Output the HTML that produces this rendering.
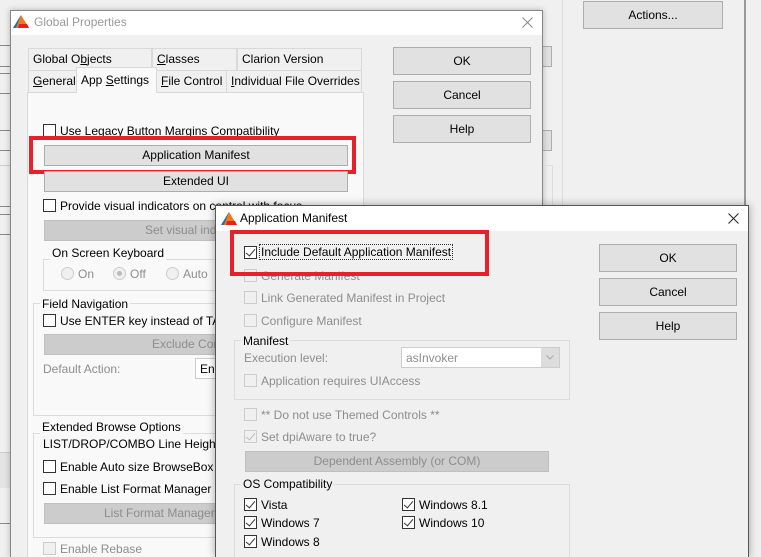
<!DOCTYPE html>
<html><head><meta charset="utf-8">
<style>
*{box-sizing:border-box;margin:0;padding:0}
html,body{width:761px;height:557px;overflow:hidden}
body{background:#f0f0f0;position:relative;font-family:"Liberation Sans",sans-serif;font-size:12px;color:#000}
.a{position:absolute}
.t{position:absolute;white-space:nowrap;line-height:14px}
.dis{color:#8d8d8d}
.btn{position:absolute;background:#e1e1e1;border:1px solid #adadad;text-align:center;white-space:nowrap;overflow:hidden}
.btnd{position:absolute;background:#cccccc;border:1px solid #bfbfbf;color:#8d8d8d;text-align:center;white-space:nowrap;overflow:hidden}
.cb{position:absolute;width:13px;height:13px;border:1px solid #333;background:#fff}
.cbd{position:absolute;width:13px;height:13px;border:1px solid #ccc;background:#f0f0f0}
.ck::after{content:"";position:absolute;left:3px;top:0px;width:4px;height:8px;border:solid #333;border-width:0 1.5px 1.5px 0;transform:rotate(40deg)}
.ckd::after{border-color:#bbb}
.grp{position:absolute;border:1px solid #dcdcdc}
.gl{position:absolute;background:#f0f0f0;padding:0 2px;white-space:nowrap;line-height:14px}
.gl2{background:#f9f9f9}
.rad{position:absolute;width:13px;height:13px;border:1px solid #ccc;border-radius:50%;background:#f0f0f0}
.red{position:absolute;border:4px solid #e8202a}
.tab{position:absolute;background:#f0f0f0;border:1px solid #d9d9d9;border-bottom:none;white-space:nowrap;padding-left:4px;line-height:20px}
</style></head><body>
<div class="a" style="left:0;top:0;width:28px;height:557px;background:#f0f0f0"></div>
<div class="a" style="left:0;top:45px;width:10px;height:1px;background:#888"></div>
<div class="a" style="left:0;top:66px;width:10px;height:1px;background:#888"></div>
<div class="a" style="left:0;top:73px;width:10px;height:1px;background:#888"></div>
<div class="a" style="left:0;top:93px;width:10px;height:1px;background:#888"></div>
<div class="a" style="left:0;top:130px;width:10px;height:1px;background:#888"></div>
<div class="a" style="left:0;top:150px;width:10px;height:1px;background:#888"></div>
<div class="a" style="left:0;top:165px;width:10px;height:1px;background:#ccc"></div>
<div class="a" style="left:0;top:206px;width:10px;height:1px;background:#888"></div>
<div class="a" style="left:0;top:214px;width:10px;height:1px;background:#888"></div>
<div class="a" style="left:0;top:234px;width:10px;height:1px;background:#888"></div>
<div class="a" style="left:0;top:452px;width:10px;height:36px;background:#e4e4e4;border-top:1px solid #ccc"></div>
<div class="a" style="left:0;top:523px;width:10px;height:1px;background:#888"></div>
<div class="a" style="left:562px;top:0;width:1px;height:557px;background:#ddd"></div>
<div class="a" style="left:744px;top:0;width:2px;height:557px;background:#999"></div>
<div class="btn" style="left:583px;top:1px;width:140px;height:28px;line-height:26px">Actions...</div>
<div class="btn" style="left:540px;top:46px;width:12px;height:21px"></div>
<div class="btn" style="left:540px;top:130px;width:12px;height:21px"></div>

<div class="a" style="left:10px;top:10px;width:533px;height:547px;background:#f0f0f0;border:1px solid #888;border-bottom:none;box-shadow:0 0 6px rgba(0,0,0,.25)"></div>
<div class="a" style="left:11px;top:11px;width:531px;height:24px;background:#fff"></div>
<svg class="a" style="left:13px;top:15px" width="16" height="13" viewBox="0 0 16 13"><polygon points="8,0 16,13 0,13" fill="#f07a1a"/><polygon points="8,0 3,13 0,13" fill="#1f6fb5"/><polygon points="6,9 14,9 16,13 5,13" fill="#e2231a"/></svg>
<div class="t" style="left:34px;top:15px;color:#999">Global Properties</div>
<svg class="a" style="left:522px;top:17px" width="11" height="11"><path d="M0.5 0.5L10.5 10.5M10.5 0.5L0.5 10.5" stroke="#888" stroke-width="1"/></svg>

<div class="tab" style="left:28px;top:48px;width:124px;height:23px">Global O<u>b</u>jects</div>
<div class="tab" style="left:152px;top:48px;width:85px;height:23px"><u>C</u>lasses</div>
<div class="tab" style="left:237px;top:48px;width:125px;height:23px">Clarion Version</div>
<div class="a" style="left:27px;top:92px;width:337px;height:465px;background:#f9f9f9;border:1px solid #d9d9d9;border-bottom:none"></div>
<div class="tab" style="left:28px;top:70px;width:49px;height:22px"><u>G</u>eneral</div>
<div class="tab" style="left:76px;top:67px;width:81px;height:26px;background:#f9f9f9;line-height:24px">App <u>S</u>ettings</div>
<div class="tab" style="left:156px;top:70px;width:71px;height:22px"><u>F</u>ile Control</div>
<div class="tab" style="left:226px;top:70px;width:136px;height:22px"><u>I</u>ndividual File Overrides</div>

<div class="cb" style="left:43px;top:124px"></div>
<div class="t" style="left:60px;top:124px">Use Legacy Button Margins Compatibility</div>
<div class="btn" style="left:44px;top:145px;width:304px;height:21px;line-height:19px">Application Manifest</div>
<div class="red" style="left:29px;top:136px;width:327px;height:38px"></div>
<div class="btn" style="left:44px;top:171px;width:304px;height:21px;line-height:19px">Extended UI</div>
<div class="cb" style="left:43px;top:199px"></div>
<div class="t" style="left:60px;top:199px">Provide visual indicators on control with focus</div>
<div class="btnd" style="left:44px;top:220px;width:304px;height:21px;line-height:19px;text-align:left;padding-left:100px">Set visual indicators...</div>
<div class="grp" style="left:43px;top:259px;width:310px;height:32px"></div>
<div class="gl gl2" style="left:50px;top:246px">On Screen Keyboard</div>
<div class="rad" style="left:61px;top:267px"></div><div class="t dis" style="left:78px;top:267px">On</div>
<div class="rad" style="left:113px;top:267px"><div class="a" style="left:3px;top:3px;width:5px;height:5px;border-radius:50%;background:#bbb"></div></div><div class="t dis" style="left:130px;top:267px">Off</div>
<div class="rad" style="left:166px;top:267px"></div><div class="t dis" style="left:183px;top:267px">Auto</div>

<div class="grp" style="left:33px;top:303px;width:320px;height:113px"></div>
<div class="gl gl2" style="left:40px;top:297px">Field Navigation</div>
<div class="cb" style="left:43px;top:314px"></div>
<div class="t" style="left:60px;top:314px">Use ENTER key instead of TAB</div>
<div class="btnd" style="left:44px;top:334px;width:304px;height:21px;line-height:19px;text-align:left;padding-left:107px">Exclude Controls</div>
<div class="t dis" style="left:43px;top:362px">Default Action:</div>
<div class="a" style="left:195px;top:358px;width:60px;height:21px;border:1px solid #ccc;background:#fff"></div>
<div class="t" style="left:200px;top:362px">Enable</div>

<div class="grp" style="left:33px;top:433px;width:320px;height:105px"></div>
<div class="gl gl2" style="left:40px;top:420px">Extended Browse Options</div>
<div class="t" style="left:43px;top:437px">LIST/DROP/COMBO Line Height:</div>
<div class="cb" style="left:43px;top:460px"></div>
<div class="t" style="left:60px;top:460px">Enable Auto size BrowseBox Columns</div>
<div class="cb" style="left:43px;top:482px"></div>
<div class="t" style="left:60px;top:482px">Enable List Format Manager</div>
<div class="btnd" style="left:44px;top:503px;width:304px;height:21px;line-height:19px;text-align:left;padding-left:59px">List Format Manager</div>
<div class="cbd" style="left:43px;top:542px"></div>
<div class="t dis" style="left:60px;top:542px">Enable Rebase</div>

<div class="btn" style="left:393px;top:47px;width:138px;height:28px;line-height:26px">OK</div>
<div class="btn" style="left:393px;top:81px;width:138px;height:28px;line-height:26px">Cancel</div>
<div class="btn" style="left:393px;top:115px;width:138px;height:28px;line-height:26px">Help</div>
<div class="a" style="left:543px;top:165px;width:10px;height:45px;border:1px solid #ddd;border-left:none"></div>

<div class="a" style="left:215px;top:205px;width:534px;height:352px;background:#f0f0f0;border:1px solid #555;border-bottom:none;box-shadow:0 0 8px rgba(0,0,0,.35)"></div>
<div class="a" style="left:216px;top:206px;width:532px;height:25px;background:#fff"></div>
<svg class="a" style="left:221px;top:212px" width="16" height="13" viewBox="0 0 16 13"><polygon points="8,0 16,13 0,13" fill="#f07a1a"/><polygon points="8,0 3,13 0,13" fill="#1f6fb5"/><polygon points="6,9 14,9 16,13 5,13" fill="#e2231a"/></svg>
<div class="t" style="left:240px;top:211px">Application Manifest</div>
<svg class="a" style="left:728px;top:213px" width="11" height="11"><path d="M0.5 0.5L10.5 10.5M10.5 0.5L0.5 10.5" stroke="#222" stroke-width="1"/></svg>

<div class="cb ck" style="left:244px;top:246px"></div>
<div class="t" style="left:260px;top:245px;outline:1px dotted #333;padding:0 1px">Include Default Application Manifest</div>
<div class="cbd" style="left:244px;top:269px"></div>
<div class="t dis" style="left:261px;top:269px">Generate Manifest</div>
<div class="red" style="left:230px;top:230px;width:259px;height:46px"></div>
<div class="cbd" style="left:244px;top:291px"></div>
<div class="t dis" style="left:261px;top:291px">Link Generated Manifest in Project</div>
<div class="cbd" style="left:244px;top:314px"></div>
<div class="t dis" style="left:261px;top:314px">Configure Manifest</div>
<div class="grp" style="left:234px;top:340px;width:336px;height:60px"></div>
<div class="gl" style="left:241px;top:334px">Manifest</div>
<div class="t dis" style="left:244px;top:351px">Execution level:</div>
<div class="a" style="left:401px;top:347px;width:159px;height:21px;border:1px solid #ccc;background:#fff"></div>
<div class="a" style="left:541px;top:348px;width:18px;height:19px;background:#ddd"></div>
<svg class="a" style="left:546px;top:355px" width="8" height="5"><path d="M0.5 0.5L4 4L7.5 0.5" stroke="#aaa" fill="none"/></svg>
<div class="t dis" style="left:406px;top:351px">asInvoker</div>
<div class="cbd" style="left:244px;top:374px"></div>
<div class="t dis" style="left:261px;top:374px">Application requires UIAccess</div>
<div class="cbd" style="left:244px;top:408px"></div>
<div class="t dis" style="left:261px;top:408px">** Do not use Themed Controls **</div>
<div class="cbd ck ckd" style="left:244px;top:430px"></div>
<div class="t dis" style="left:261px;top:430px">Set dpiAware to true?</div>
<div class="btnd" style="left:245px;top:451px;width:304px;height:21px;line-height:19px">Dependent Assembly (or COM)</div>
<div class="grp" style="left:234px;top:484px;width:336px;height:73px;border-bottom:none"></div>
<div class="gl" style="left:241px;top:477px">OS Compatibility</div>
<div class="cb ck" style="left:244px;top:498px"></div><div class="t" style="left:261px;top:498px">Vista</div>
<div class="cb ck" style="left:244px;top:516px"></div><div class="t" style="left:261px;top:516px">Windows 7</div>
<div class="cb ck" style="left:244px;top:535px"></div><div class="t" style="left:261px;top:535px">Windows 8</div>
<div class="cb ck" style="left:402px;top:498px"></div><div class="t" style="left:419px;top:498px">Windows 8.1</div>
<div class="cb ck" style="left:402px;top:516px"></div><div class="t" style="left:419px;top:516px">Windows 10</div>

<div class="btn" style="left:599px;top:244px;width:138px;height:28px;line-height:26px">OK</div>
<div class="btn" style="left:599px;top:278px;width:138px;height:28px;line-height:26px">Cancel</div>
<div class="btn" style="left:599px;top:312px;width:138px;height:28px;line-height:26px">Help</div>
</body></html>
